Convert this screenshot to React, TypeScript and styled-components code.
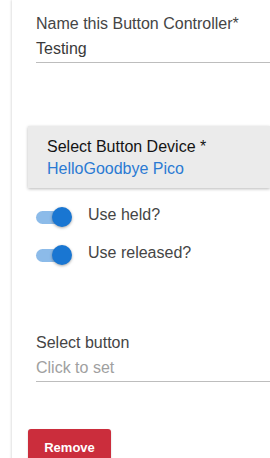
import React, { useState } from 'react';
import styled, { createGlobalStyle } from 'styled-components';

const GlobalStyle = createGlobalStyle`
  html, body {
    margin: 0;
    padding: 0;
    background: #ffffff;
    overflow: hidden;
  }
  body {
    font-family: "Liberation Sans", Arial, sans-serif;
  }
`;

const Page = styled.div`
  padding-left: 12px;
  height: 100vh;
  overflow: hidden;
`;

// white card, only its left shadow is visible
const Card = styled.div`
  min-height: 100%;
  background: #fff;
  box-shadow: -1px 0 2px rgba(0, 0, 0, 0.12);
  padding: 0 0 0 16px;
  box-sizing: border-box;
`;

const Field = styled.div<{ $top?: number }>`
  margin-top: ${(p) => p.$top ?? 0}px;
  margin-left: 8px;
  padding-top: 14px;
  padding-bottom: 3px;
  border-bottom: 1px solid #bdbdbd;
  cursor: pointer;
`;

const FieldLabel = styled.div`
  font-size: 16px;
  line-height: 20px;
  color: #454545;
`;

const FieldValue = styled.div<{ $placeholder?: boolean }>`
  margin-top: 5px;
  font-size: 16px;
  line-height: 20px;
  color: ${(p) => (p.$placeholder ? '#a0a0a0' : '#3a3a3a')};
`;

const DeviceBox = styled.div`
  margin-top: 63px;
  background: #ebebeb;
  padding: 11px 19px 9px;
  box-shadow: 0 1px 3px rgba(0, 0, 0, 0.28);
  cursor: pointer;
`;

const DeviceLabel = styled.div`
  font-size: 16px;
  line-height: 20px;
  color: #141414;
`;

const DeviceName = styled.div`
  margin-top: 2px;
  font-size: 16px;
  line-height: 20px;
  color: #2a7ad3;
`;

const SwitchList = styled.div`
  margin-top: 10px;
  margin-left: 8px;
`;

const SwitchRow = styled.label`
  display: flex;
  align-items: flex-start;
  height: 38px;
  cursor: pointer;
`;

const Switch = styled.span<{ $on: boolean }>`
  position: relative;
  width: 36px;
  height: 20px;
  margin-top: 9px;
  flex-shrink: 0;

  &::before {
    content: '';
    position: absolute;
    left: 0;
    top: 4px;
    width: 34px;
    height: 13px;
    border-radius: 7px;
    background: ${(p) => (p.$on ? '#8cbbe9' : '#bdbdbd')};
  }

  &::after {
    content: '';
    position: absolute;
    top: 0;
    left: ${(p) => (p.$on ? '16px' : '0')};
    width: 20px;
    height: 20px;
    border-radius: 50%;
    background: ${(p) => (p.$on ? '#1976d2' : '#fafafa')};
    box-shadow: 0 1px 3px rgba(0, 0, 0, 0.35);
  }
`;

const SwitchText = styled.span`
  margin-left: 16px;
  padding-top: 7px;
  font-size: 16px;
  line-height: 20px;
  color: #454545;
`;

const RemoveButton = styled.button`
  display: block;
  margin-top: 47px;
  width: 83px;
  height: 36px;
  border: none;
  border-radius: 3px;
  background: #cb2d3c;
  color: #fff;
  font-family: "Liberation Sans", Arial, sans-serif;
  font-size: 13px;
  font-weight: bold;
  box-shadow: 0 1px 2px rgba(0, 0, 0, 0.2);
  padding: 0;
  cursor: pointer;
`;

export default function App() {
  const [held, setHeld] = useState(true);
  const [released, setReleased] = useState(true);

  return (
    <>
      <GlobalStyle />
      <Page>
        <Card>
          <Field>
            <FieldLabel>Name this Button Controller*</FieldLabel>
            <FieldValue>Testing</FieldValue>
          </Field>

          <DeviceBox>
            <DeviceLabel>Select Button Device *</DeviceLabel>
            <DeviceName>HelloGoodbye Pico</DeviceName>
          </DeviceBox>

          <SwitchList>
            <SwitchRow onClick={() => setHeld(!held)}>
              <Switch $on={held} />
              <SwitchText>Use held?</SwitchText>
            </SwitchRow>
            <SwitchRow onClick={() => setReleased(!released)}>
              <Switch $on={released} />
              <SwitchText>Use released?</SwitchText>
            </SwitchRow>
          </SwitchList>

          <Field $top={45}>
            <FieldLabel>Select button</FieldLabel>
            <FieldValue $placeholder>Click to set</FieldValue>
          </Field>

          <RemoveButton>Remove</RemoveButton>
        </Card>
      </Page>
    </>
  );
}
